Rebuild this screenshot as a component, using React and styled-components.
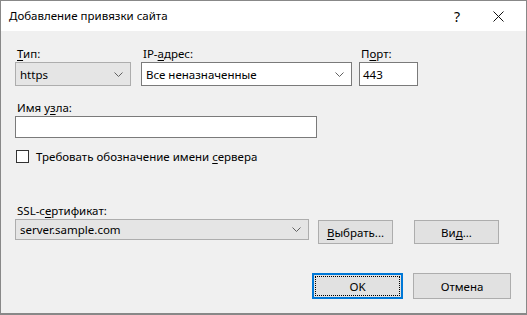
import React from "react";
import styled, { createGlobalStyle } from "styled-components";

const GlobalStyle = createGlobalStyle`
  html, body {
    margin: 0;
    padding: 0;
    background: #ffffff;
  }
  * {
    box-sizing: border-box;
  }
`;

function Chevron() {
  return (
    <svg width="9" height="5" viewBox="0 0 9 5">
      <path d="M0.5 0.5 L4.5 4.5 L8.5 0.5" fill="none" stroke="#606060" strokeWidth="1" />
    </svg>
  );
}

function Combo({ value, width, height, editable }) {
  return (
    <ComboBox $width={width} $height={height} $editable={editable}>
      <span>{value}</span>
      <Chevron />
    </ComboBox>
  );
}

export default function App() {
  return (
    <Window>
      <GlobalStyle />
      <TitleBar>
        <h1>Добавление привязки сайта</h1>
        <TitleButtons>
          <span className="help">?</span>
          <svg width="11" height="11" viewBox="0 0 11 11">
            <path d="M0.5 0.5 L10.5 10.5 M10.5 0.5 L0.5 10.5" stroke="#111" strokeWidth="1" />
          </svg>
        </TitleButtons>
      </TitleBar>

      <Body>
        <BindingRow>
          <Field>
            <Label><u>Т</u>ип:</Label>
            <Combo value="https" width={116} height={24} />
          </Field>
          <Field $gap={10}>
            <Label>IP-<u>а</u>дрес:</Label>
            <Combo value="Все неназначенные" width={211} height={24} editable />
          </Field>
          <Field $gap={7}>
            <Label>П<u>о</u>рт:</Label>
            <TextBox $width={59} $height={24}>443</TextBox>
          </Field>
        </BindingRow>

        <Field $top={15}>
          <Label>Имя у<u>з</u>ла:</Label>
          <TextBox $width={302} $height={22} />
        </Field>

        <CheckRow>
          <CheckBox />
          <span>Требовать обозначение имени <u>с</u>ервера</span>
        </CheckRow>

        <Field $top={41}>
          <Label>SSL-с<u>е</u>ртификат:</Label>
          <CertRow>
            <Combo value="server.sample.com" width={294} height={21} />
            <Button $width={75} $gap={9} $offset={1}><u>В</u>ыбрать...</Button>
            <Button $width={85} $gap={21} $offset={1}>Ви<u>д</u>...</Button>
          </CertRow>
        </Field>

        <Footer>
          <Button $width={91} $height={26} $default>OK</Button>
          <Button $width={98} $height={26} $gap={10}>Отмена</Button>
        </Footer>
      </Body>
    </Window>
  );
}

const Window = styled.div`
  width: 527px;
  height: 315px;
  display: flex;
  flex-direction: column;
  background: #f0f0f0;
  border: 1px solid #888888;
  border-bottom-width: 2px;
  font-family: "Noto Sans", "Segoe UI", sans-serif;
  font-size: 11.5px;
  color: #000000;
  overflow: hidden;
`;

const TitleBar = styled.div`
  height: 30px;
  flex: none;
  background: #ffffff;
  display: flex;
  align-items: center;
  justify-content: space-between;
  padding: 0 0 0 8px;
  h1 {
    margin: 0;
    font-size: 11.5px;
    font-weight: 400;
    line-height: 16px;
  }
`;

const TitleButtons = styled.div`
  display: flex;
  align-items: center;
  height: 100%;
  span.help {
    width: 46px;
    text-align: center;
    font-size: 14px;
  }
  svg {
    margin: 0 22px 0 13px;
  }
`;

const Body = styled.div`
  flex: 1;
  display: flex;
  flex-direction: column;
  padding: 16px 14px 0 14px;
`;

const BindingRow = styled.div`
  display: flex;
`;

const Field = styled.div`
  display: flex;
  flex-direction: column;
  margin-left: ${(p) => (p.$gap || 0)}px;
  margin-top: ${(p) => (p.$top || 0)}px;
`;

const Label = styled.div`
  height: 15px;
  line-height: 14px;
  padding-left: 2px;
  white-space: nowrap;
  u {
    text-underline-offset: 2px;
  }
`;

const ComboBox = styled.div`
  width: ${(p) => p.$width}px;
  height: ${(p) => p.$height}px;
  display: flex;
  align-items: center;
  justify-content: space-between;
  padding: 0 7px 0 4px;
  background: ${(p) => (p.$editable ? "#ffffff" : "#e5e5e5")};
  border: 1px solid ${(p) => (p.$editable ? "#7a7a7a" : "#adadad")};
  white-space: nowrap;
  svg {
    flex: none;
  }
`;

const TextBox = styled.div`
  width: ${(p) => p.$width}px;
  height: ${(p) => p.$height}px;
  display: flex;
  align-items: center;
  padding: 0 3px;
  background: #ffffff;
  border: 1px solid #7a7a7a;
`;

const CheckRow = styled.div`
  display: flex;
  align-items: center;
  gap: 7px;
  margin-top: 12px;
  padding-left: 1px;
  line-height: 13px;
  u {
    text-underline-offset: 2px;
  }
`;

const CheckBox = styled.span`
  width: 13px;
  height: 13px;
  flex: none;
  background: #ffffff;
  border: 1px solid #333333;
`;

const CertRow = styled.div`
  display: flex;
  align-items: flex-start;
`;

const Button = styled.div`
  position: relative;
  width: ${(p) => p.$width}px;
  height: ${(p) => p.$height || 24}px;
  margin-left: ${(p) => (p.$gap || 0)}px;
  margin-top: ${(p) => (p.$offset || 0)}px;
  display: flex;
  align-items: center;
  justify-content: center;
  background: #e1e1e1;
  border: ${(p) => (p.$default ? "2px solid #0078d7" : "1px solid #adadad")};
  white-space: nowrap;
  u {
    text-underline-offset: 2px;
  }
  ${(p) =>
    p.$default &&
    `
    &::after {
      content: "";
      position: absolute;
      inset: 1px;
      border: 1px dotted #000000;
    }
  `}
`;

const Footer = styled.div`
  display: flex;
  justify-content: flex-end;
  margin-top: auto;
  margin-bottom: 14px;
  padding-right: 1px;
`;
